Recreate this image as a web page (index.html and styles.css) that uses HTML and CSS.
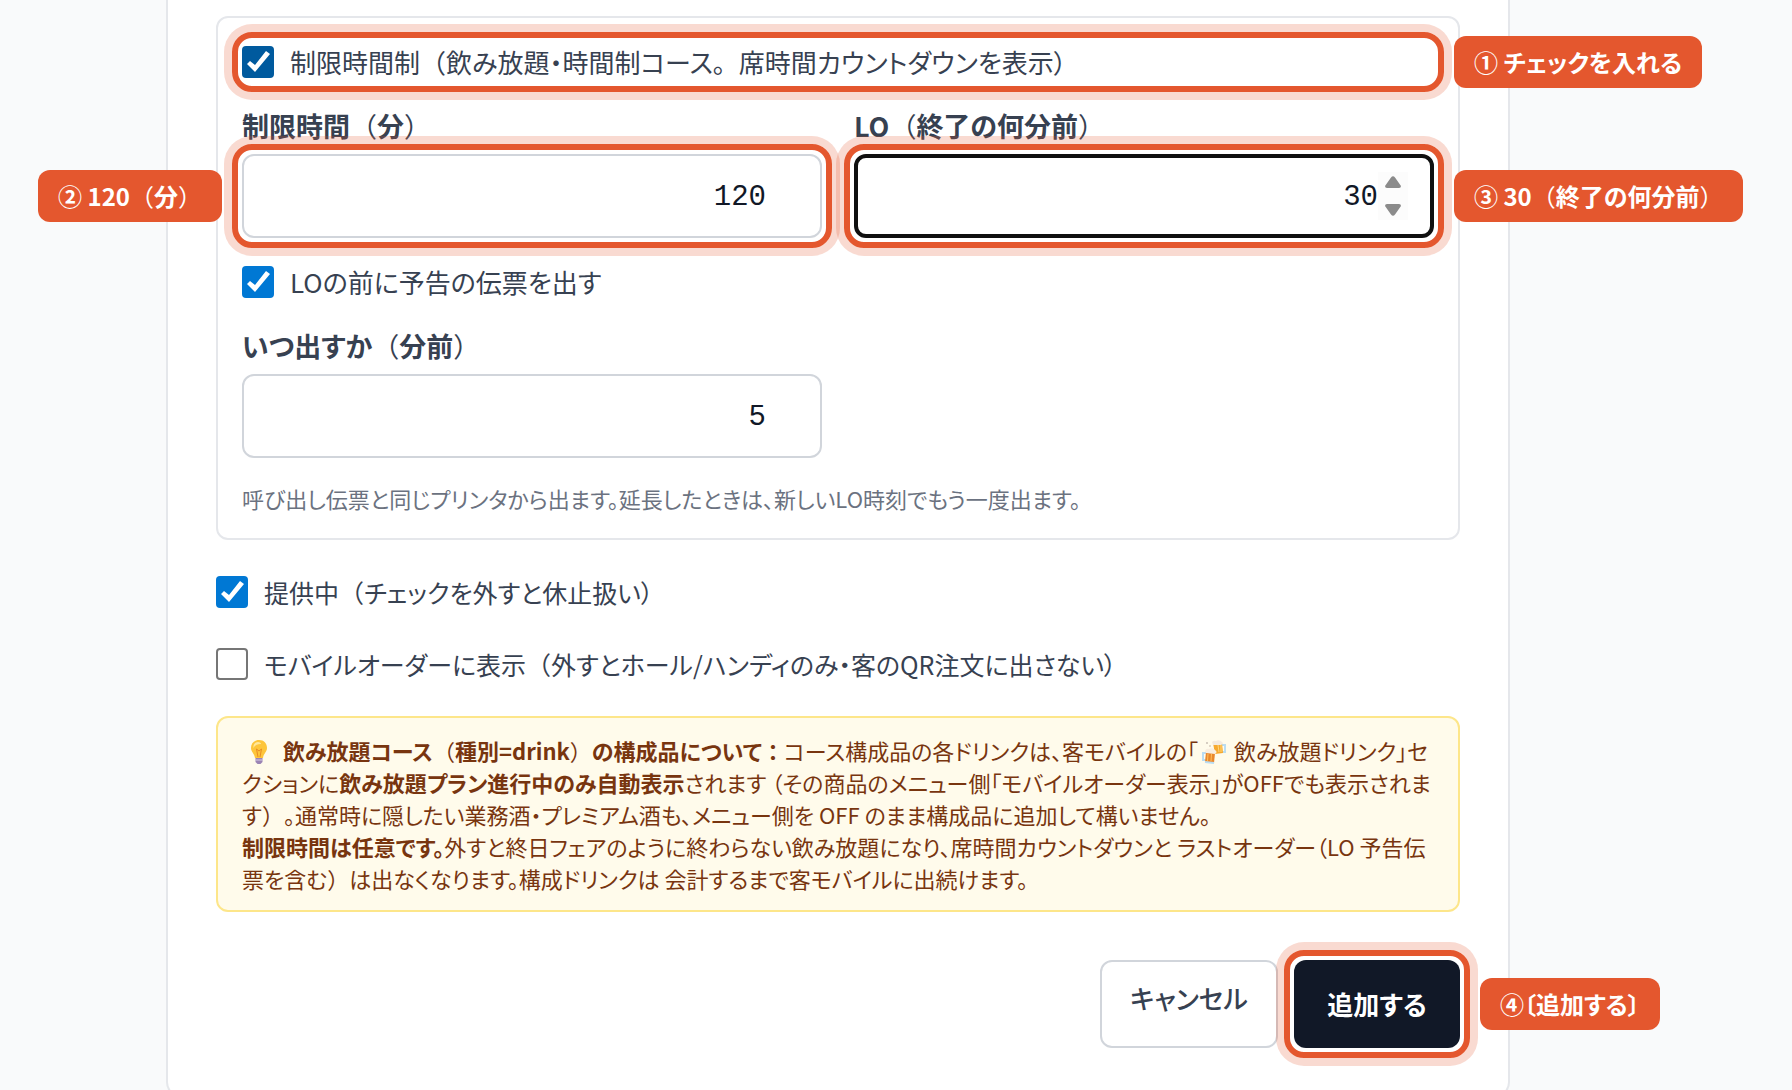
FILE: index.html
```html
<!DOCTYPE html>
<html lang="ja">
<head>
<meta charset="utf-8">
<meta name="viewport" content="width=device-width, initial-scale=1">
<title>コースの追加</title>
<link rel="stylesheet" href="styles.css">
</head>
<body>
<main class="page">
  <form class="panel">
    <fieldset class="group">
      <div class="check-row marked">
        <input class="check check-hover" type="checkbox" id="timed" checked>
        <label for="timed">制限時間制<span class="full">（</span>飲み放題・時間制コース<span class="full">。</span>席時間カウントダウンを表示）</label>
        <span class="callout callout-right">① チェックを入れる</span>
      </div>
      <div class="columns">
        <div class="field">
          <label class="field-label" for="limit">制限時間<span class="full">（</span>分<span class="full">）</span></label>
          <div class="control marked">
            <input class="number" type="number" id="limit" value="120">
            <span class="callout callout-left">② 120<span class="full">（</span>分<span class="full">）</span></span>
          </div>
        </div>
        <div class="field">
          <label class="field-label" for="lo">LO<span class="full">（</span>終了の何分前<span class="full">）</span></label>
          <div class="control marked">
            <input class="number number-active" type="number" id="lo" value="30">
            <svg class="spinner" viewBox="0 0 30 48" aria-hidden="true"><path d="M0 0H30V48H0Z" fill="#fcfcfc"/><path d="M13 5.500Q15 3 17 5.500L23 14Q23 16 21 16H9Q7 16 7 14ZM13 42.500Q15 45 17 42.500L23 34Q23 32 21 32H9Q7 32 7 34Z" fill="#8b8b8b"/></svg>
            <span class="callout callout-right">③ 30<span class="full">（</span>終了の何分前<span class="full">）</span></span>
          </div>
        </div>
      </div>
      <div class="check-row">
        <input class="check" type="checkbox" id="notice" checked>
        <label for="notice">LOの前に予告の伝票を出す</label>
      </div>
      <div class="columns">
        <div class="field">
          <label class="field-label" for="before">いつ出すか<span class="full">（</span>分前<span class="full">）</span></label>
          <div class="control">
            <input class="number" type="number" id="before" value="5">
          </div>
        </div>
      </div>
      <p class="hint">呼び出し伝票と同じプリンタから出ます。延長したときは、新しいLO時刻でもう一度出ます。</p>
    </fieldset>

    <div class="check-row check-row-outer">
      <input class="check" type="checkbox" id="active" checked>
      <label for="active">提供中<span class="full">（</span>チェックを外すと休止扱い）</label>
    </div>
    <div class="check-row check-row-outer">
      <input class="check" type="checkbox" id="mobile">
      <label for="mobile">モバイルオーダーに表示<span class="full">（</span>外すとホール/ハンディのみ・客のQR注文に出さない）</label>
    </div>

    <p class="note">
      <svg class="emoji" viewBox="0 0 32 24" role="img" aria-label="電球"><path d="M17 0C12 0 9 3.500 9 8C9 12 12.500 13.500 13 18H21C21.500 13.500 25 12 25 8C25 3.500 22 0 17 0Z" fill="#fdc53b"/><path d="M16 2C12.500 2 11 5 11.500 8C13 5 15 4 19 4C19 3 18 2 16 2Z" fill="#ffe79a"/><path d="M14.500 9L16 17M19.500 9L18 17M14.500 9L17 11L19.500 9" stroke="#e98b24" fill="none"/><path d="M13.500 18H20.500V22L18.500 24H15.500L13.500 22Z" fill="#9b84b4"/><path d="M13.500 20H20.500" stroke="#d6cbe4"/></svg>
      <strong>飲み放題コース<span class="full">（</span>種別=drink<span class="full">）</span>の構成品について<span class="full full-bold">：</span></strong>コース構成品の各ドリンクは、客モバイルの「<svg class="emoji" viewBox="0 0 32 24" role="img" aria-label="乾杯"><path d="M23 5H27V12H24" stroke="#b9dcf2" stroke-width="2" fill="none"/><path d="M9 13H5V20H9" stroke="#b9dcf2" stroke-width="2" fill="none"/><path d="M15 3L24 3L25 13L17 14Z" fill="#f6a92f"/><path d="M20 5L21 12M23 5V12" stroke="#ffd779"/><path d="M14 2Q16 0 18 1Q21 -1 24 2Q26 4 23 5H15Z" fill="#f3eadf"/><path d="M8 12L17 13L16 23L7 22Z" fill="#e9872c"/><path d="M10 14L9.500 21M13.500 14L13 21" stroke="#ffc05a"/><path d="M7 11Q8 8 11 9Q15 7 17 10Q20 12 17 14L8 13Z" fill="#f8eee0"/><path d="M7 22L16 23" stroke="#b9dcf2" stroke-width="2"/><circle cx="9" cy="3" r="1" fill="#c9bfb5"/><circle cx="12" cy="6" r="1" fill="#d8cdbd"/></svg>飲み放題ドリンク」セクションに<strong>飲み放題プラン進行中のみ自動表示</strong>されます （その商品のメニュー側「モバイルオーダー表示」がOFFでも表示されます<span class="full">）</span>。通常時に隠したい業務酒・プレミアム酒も、メニュー側を OFF のまま構成品に追加して構いません。<br>
      <strong>制限時間は任意です。</strong>外すと終日フェアのように終わらない飲み放題になり、席時間カウントダウンと ラストオーダー（LO 予告伝票を含む<span class="full">）</span>は出なくなります。構成ドリンクは 会計するまで客モバイルに出続けます。
    </p>

    <div class="actions">
      <a class="cancel" href="#">キャンセル</a>
      <div class="marked">
        <button class="submit" type="button">追加する</button>
        <span class="callout callout-right">④〔追加する〕</span>
      </div>
    </div>
  </form>
</main>
</body>
</html>
```
FILE: styles.css
```css
* {
  box-sizing: border-box;
}

body {
  margin: 0;
  background: #f9fafb;
  color: #374151;
  font-family: "Noto Sans CJK JP", "Noto Sans", sans-serif;
  font-feature-settings: "palt";
  font-size: 26px;
  line-height: 40px;
}

/* Punctuation that keeps its full em width */
.full {
  font-feature-settings: normal;
  font-weight: 400;
  text-spacing-trim: space-all;
}

.full-bold {
  font-weight: 700;
}

.page {
  height: 100vh;
  overflow: hidden;
  padding: 0 282px 0 166px;
}

.panel {
  display: flex;
  flex-direction: column;
  gap: 32px;
  padding: 16px 48px 48px;
  background: #fff;
  border: 2px solid #e5e7eb;
  border-top: 0;
  border-radius: 0 0 16px 16px;
}

.group {
  display: flex;
  flex-direction: column;
  gap: 24px;
  min-width: 0;
  margin: 0;
  padding: 24px;
  border: 2px solid #e5e7eb;
  border-radius: 12px;
}

.check-row {
  display: flex;
  align-items: center;
  gap: 16px;
}

.check-row-outer {
  font-size: 25px;
}

.check {
  appearance: none;
  flex: none;
  width: 32px;
  height: 32px;
  margin: 0;
  background: #fff;
  border: 2px solid #767676;
  border-radius: 4px;
}

.check:checked {
  background: #0078d4;
  border: 0;
}

.check:checked::after {
  content: "";
  display: block;
  width: 32px;
  height: 32px;
  background: #fff;
  clip-path: polygon(5px 18px, 8px 15px, 13px 19px, 24px 5px, 28px 8px, 13px 26px);
}

.check-hover:checked {
  background: #005a9e;
}

.columns {
  display: grid;
  grid-template-columns: 1fr 1fr;
  gap: 32px;
}

.field {
  display: flex;
  flex-direction: column;
  gap: 8px;
}

.field-label {
  font-size: 27px;
  font-weight: 700;
}

.control {
  position: relative;
}

.number {
  appearance: textfield;
  display: block;
  width: 100%;
  height: 84px;
  padding: 2px 54px 0 24px;
  background: #fff;
  border: 2px solid #d1d5db;
  border-radius: 12px;
  color: #111827;
  font-family: "Liberation Mono", monospace;
  font-size: 29px;
  text-align: right;
}

.number::-webkit-inner-spin-button {
  appearance: none;
  margin: 0;
}

.number-active {
  padding-right: 52px;
  border: 4px solid #101010;
}

.spinner {
  position: absolute;
  top: 18px;
  right: 26px;
  width: 30px;
  height: 48px;
}

.hint {
  margin: 0;
  color: #6b7280;
  font-size: 22px;
  line-height: 32px;
}

.note {
  margin: 0;
  padding: 16px 24px;
  background: #fffbeb;
  border: 2px solid #fde68a;
  border-radius: 12px;
  color: #78350f;
  font-size: 22px;
  line-height: 32px;
}

.note strong {
  font-weight: 700;
}

.emoji {
  width: 32px;
  height: 24px;
  margin-right: 4px;
  vertical-align: -4px;
}

.actions {
  display: flex;
  justify-content: flex-end;
  gap: 16px;
  padding-top: 16px;
}

.cancel,
.submit {
  border-radius: 12px;
  font-size: 26px;
  line-height: 40px;
}

.cancel {
  min-width: 178px;
  padding: 16px 24px;
  border: 2px solid #d1d5db;
  color: #374151;
  font-weight: 500;
  text-align: center;
  text-decoration: none;
}

.submit {
  display: block;
  min-width: 166px;
  height: 88px;
  padding: 0 24px;
  background: #111827;
  border: 0;
  color: #fff;
  font-family: inherit;
  font-feature-settings: inherit;
  font-weight: 700;
}

/* Tutorial highlight: ring around a target, with a numbered callout beside it */
.marked {
  position: relative;
}

.marked::after {
  content: "";
  position: absolute;
  inset: -10px;
  z-index: 1;
  border: 6px solid #e4572e;
  border-radius: 20px;
  box-shadow: 0 0 0 8px rgba(228, 87, 46, 0.22);
  pointer-events: none;
}

.callout {
  position: absolute;
  top: 50%;
  z-index: 2;
  padding: 6px 20px;
  background: #e4572e;
  border-radius: 12px;
  color: #fff;
  font-size: 24px;
  font-weight: 700;
  line-height: 40px;
  white-space: nowrap;
  transform: translateY(-50%);
}

.callout-right {
  left: calc(100% + 20px);
}

.callout-left {
  right: calc(100% + 20px);
}
```
